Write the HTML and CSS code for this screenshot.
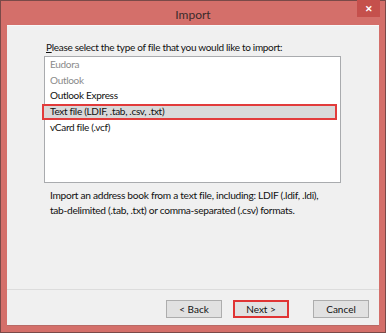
FILE: index.html
```html
<!DOCTYPE html>
<html lang="en">
<head>
  <meta charset="UTF-8">
  <title>Import</title>
  <link rel="stylesheet" href="styles.css">
</head>
<body>
  <div class="window">
    <div class="titlebar">
      <span class="title">Import</span>
      <span class="close">&#x2715;</span>
    </div>

    <div class="content">
      <div class="main">
        <p class="prompt"><u>P</u>lease select the type of file that you would like to import:</p>
        <div class="listbox">
          <div class="item disabled">Eudora</div>
          <div class="item disabled">Outlook</div>
          <div class="item">Outlook Express</div>
          <div class="item selected">Text file (LDIF, .tab, .csv, .txt)</div>
          <div class="item">vCard file (.vcf)</div>
        </div>
        <p class="desc">Import an address book from a text file, including: LDIF (.ldif, .ldi),<br>tab-delimited (.tab, .txt) or comma-separated (.csv) formats.</p>
      </div>

      <div class="buttons">
        <button class="btn">&lt; Back</button>
        <button class="btn marked">Next &gt;</button>
        <button class="btn cancel">Cancel</button>
      </div>
    </div>
  </div>
</body>
</html>
```

FILE: styles.css
```css
body {
  margin: 0;
  font-family: Lato, "Noto Sans", sans-serif;
  background: #fff;
}
.window {
  width: 386px;
  height: 333px;
  box-sizing: border-box;
  border: 1px solid #7a4a48;
  background: #d46f6a;
  padding: 0 6px 6px 6px;
  display: flex;
  flex-direction: column;
}
.titlebar {
  height: 24px;
  display: flex;
  align-items: center;
  justify-content: center;
  position: relative;
}
.title {
  font-size: 12px;
  color: #3a2a2a;
  margin-top: 2px;
}
.close {
  position: absolute;
  right: -1px;
  top: -1px;
  width: 23px;
  height: 17px;
  background: #c5504c;
  color: #fff;
  font-size: 9px;
  font-weight: bold;
  display: flex;
  align-items: center;
  justify-content: center;
}
.content {
  flex: 1;
  background: #f0f0f0;
  border-top: 1px solid #f8f8f8;
  border-bottom: 1px solid #b86a66;
  display: flex;
  flex-direction: column;
}
.main {
  flex: 1;
  padding: 14px 0 0 37px;
  border-bottom: 1px solid #dcdcdc;
  letter-spacing: -0.3px;
}
.prompt {
  margin: 0 0 2px 2px;
  font-size: 10px;
  line-height: 14px;
  color: #111;
}
.listbox {
  width: 297px;
  height: 127px;
  box-sizing: border-box;
  border: 1px solid #a9abae;
  background: #fff;
}
.item {
  height: 15.6px;
  line-height: 14px;
  font-size: 10px;
  padding-left: 5px;
  color: #111;
  white-space: nowrap;
}
.item.disabled {
  color: #8a8a8a;
}
.item.selected {
  background: #d9d9d9;
  border: 2px solid #e23b3b;
  margin-left: -3px;
  width: 295px;
  box-sizing: border-box;
  padding-left: 6px;
  line-height: 11px;
  height: 16px;
}
.desc {
  margin: 5px 0 0 6px;
  font-size: 10.2px;
  line-height: 15px;
  color: #111;
}
.buttons {
  height: 35px;
  box-sizing: border-box;
  padding: 3px 10px 0 0;
  display: flex;
  align-items: center;
  justify-content: flex-end;
}
.btn {
  width: 56px;
  height: 18px;
  padding: 0;
  margin-left: 11px;
  border: 1px solid #adadad;
  background: #e1e1e1;
  font-family: inherit;
  font-size: 10px;
  color: #111;
}
.btn.marked {
  border: 2px solid #e03434;
}
.btn.cancel {
  margin-left: 24px;
}
```
